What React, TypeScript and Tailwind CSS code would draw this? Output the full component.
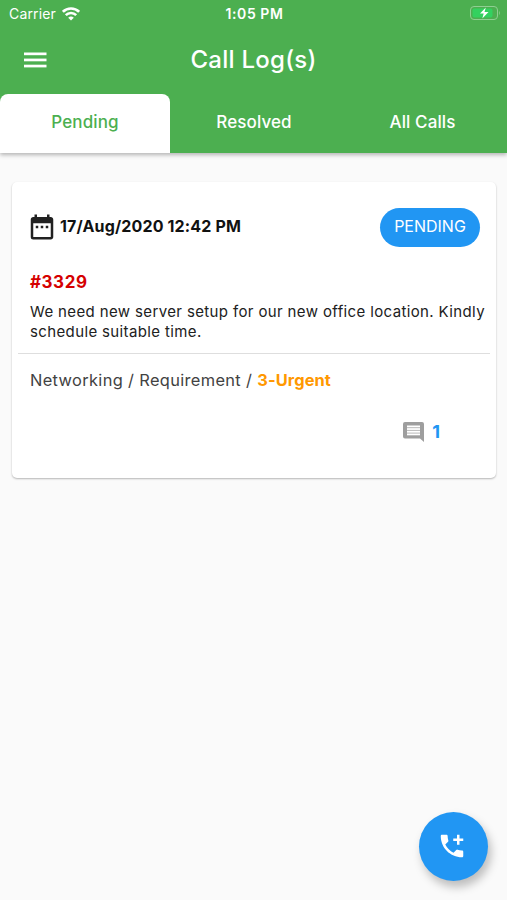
import { MdAddIcCall, MdDateRange } from "react-icons/md";

const tabs = ["Pending", "Resolved", "All Calls"];

function StatusBar() {
  return (
    <div className="grid h-7 grid-cols-3 items-center pl-[9px] pr-[7px] text-white">
      <div className="flex items-center gap-[6px]">
        <span className="text-[14px] leading-none tracking-[0.15px]">Carrier</span>
        <svg className="mb-[1px] h-[14px] w-[18px]" viewBox="0 0 18 14" fill="none" stroke="currentColor" strokeWidth="2.6">
          <path d="M0.900 4.800a11.500 11.500 0 0 1 16.200 0" />
          <path d="M3.800 8.200a7.300 7.300 0 0 1 10.400 0" />
          <path d="M9 13.600L6.200 10.800a4.200 4.200 0 0 1 5.600 0z" fill="currentColor" stroke="none" />
        </svg>
      </div>
      <span className="text-center text-[14px] font-semibold leading-none tracking-[0.55px]">1:05 PM</span>
      <svg className="mb-[2px] h-[14px] w-[30px] justify-self-end" viewBox="0 0 30 14">
        <rect x="0.5" y="0.5" width="27" height="13" rx="3.5" fill="none" stroke="#8fce92" />
        <rect x="2.500" y="2.500" width="20" height="9" rx="2" fill="#33d15f" />
        <path d="M29 5c1 .5 1 3.500 0 4z" fill="#8fce92" />
        <path d="M15.800 1.500L10 7.600h3.700L12.300 12.500l6.200-6.500h-4z" fill="#fff" />
      </svg>
    </div>
  );
}

function MenuIcon() {
  return (
    <svg className="ml-6 h-[16px] w-[23px]" viewBox="0 0 23 16" fill="currentColor">
      <rect y="0.500" width="22.500" height="2.700" />
      <rect y="6.600" width="22.500" height="2.700" />
      <rect y="12.700" width="22.500" height="2.700" />
    </svg>
  );
}

function CommentIcon() {
  return (
    <svg className="h-[20px] w-[21px]" viewBox="0 0 21 20">
      <path d="M2 0h17a2 2 0 0 1 2 2v18l-4-3.500H2a2 2 0 0 1-2-2V2a2 2 0 0 1 2-2z" fill="#9e9e9e" />
      <path d="M4 3.500h13v9.800H4z" fill="#fff" />
      <path d="M4 5.700h13M4 8.400h13M4 11.100h13" stroke="#b0b0b0" strokeWidth="0.900" />
    </svg>
  );
}

function CallCard() {
  return (
    <article className="ml-3 mr-[11px] mt-[28.5px] h-[296px] rounded-[5px] bg-white shadow-[0_1px_2px_rgba(0,0,0,0.28)]">
      <div className="flex items-center pl-[15px] pr-4 pt-[26px]">
        <MdDateRange className="size-[30px] text-[#212121]" />
        <span className="ml-[3px] flex-1 pb-[3px] text-[16px] font-bold tracking-[0.15px] text-[#111]">
          17/Aug/2020 12:42 PM
        </span>
        <span className="flex h-[39px] w-[100px] items-center justify-center rounded-full bg-[#2196f3] pb-[2px] text-[16px] text-white">
          PENDING
        </span>
      </div>
      <div className="px-[18px] pt-[23.5px]">
        <h2 className="text-[17px] font-bold leading-6 tracking-[0.55px] text-[#d50000]">#3329</h2>
        <p className="mt-[8px] whitespace-nowrap text-[15px] leading-[19.5px] tracking-[0.37px] text-[#212121]">
          We need new server setup for our new office location. Kindly
          <br />
          schedule suitable time.
        </p>
      </div>
      <hr className="mx-[6px] mt-[12px] border-[#dedede]" />
      <p className="px-[18px] pt-[14px] text-[16.4px] leading-6 tracking-[0.35px] text-[#424242]">
        Networking / Requirement / <span className="font-bold tracking-[0.1px] text-[#ff9800]">3-Urgent</span>
      </p>
      <div className="flex items-center justify-end pr-[56px] pt-[28px]">
        <CommentIcon />
        <span className="ml-[8px] text-[18px] font-bold leading-6 text-[#2196f3]">1</span>
      </div>
    </article>
  );
}

export default function App() {
  return (
    <div className="relative h-[900px] w-[507px] overflow-hidden bg-[#fafafa] font-['Inter',sans-serif]">
      <header className="h-[153px] bg-[#4caf50] shadow-[0_2px_4px_rgba(0,0,0,0.28)]">
        <StatusBar />
        <div className="grid h-[66px] grid-cols-[90px_1fr_90px] items-center pb-[3px] text-white">
          <MenuIcon />
          <h1 className="text-center text-[24px] font-medium leading-none tracking-[0.25px]">Call Log(s)</h1>
        </div>
        <nav className="grid h-[59px] grid-cols-[170px_168px_169px]">
          {tabs.map((tab, i) => (
            <button
              key={tab}
              className={
                i === 0
                  ? "rounded-t-[8px] bg-white pb-[2px] text-[17px] font-medium tracking-[0.1px] text-[#4caf50]"
                  : "pb-[2px] text-[17px] font-medium tracking-[0.1px] text-white"
              }
            >
              {tab}
            </button>
          ))}
        </nav>
      </header>

      <CallCard />

      {/* Floating action button */}
      <button className="absolute bottom-[19.5px] right-[19.5px] flex size-[69px] items-center justify-center rounded-full bg-[#2196f3] pr-[2px] text-white shadow-[3px_6px_10px_rgba(0,0,0,0.25)]">
        <MdAddIcCall className="size-[30px]" />
      </button>
    </div>
  );
}
